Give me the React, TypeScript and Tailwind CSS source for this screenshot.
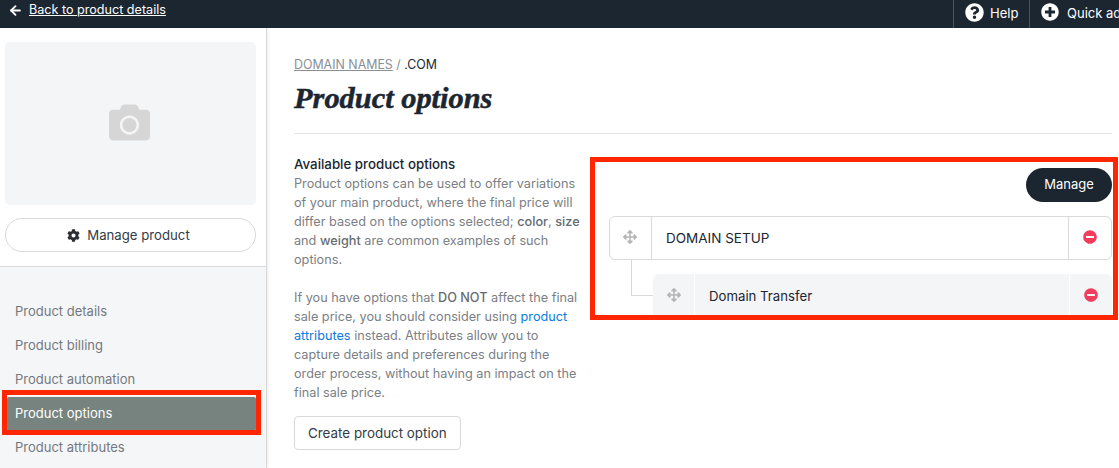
import { ArrowLeft } from 'lucide-react';
import { FaCamera, FaCog, FaMinusCircle, FaPlusCircle, FaQuestionCircle, FaArrowsAlt } from 'react-icons/fa';

const navItems = ['Product details', 'Product billing', 'Product automation', 'Product options', 'Product attributes'];

function OptionRow({ label, child }: { label: string; child?: boolean }) {
  return (
    <div
      className={
        child
          ? 'flex h-[44px] rounded-t-[6px] bg-[#f4f5f7]'
          : 'flex h-[44px] rounded-[6px] border border-[#d9d9d9] bg-white'
      }
    >
      <div
        className={
          child
            ? 'flex w-[42px] shrink-0 items-center justify-center border-r border-white pb-[2px] text-[#b5b5b5]'
            : 'flex w-[42px] shrink-0 items-center justify-center border-r border-[#d9d9d9] pr-[2px] pb-[3px] text-[#b5b5b5]'
        }
      >
        <FaArrowsAlt size={14} />
      </div>
      <div
        className={
          child
            ? 'flex flex-1 items-center pl-[14px] pt-[1px] text-[13.2px] text-[#1b2631]'
            : 'flex flex-1 items-center pl-[14px] text-[13.5px] text-[#1b2631]'
        }
      >
        {label}
      </div>
      <div
        className={
          child
            ? 'flex w-[43px] shrink-0 items-center justify-center border-l border-white pb-[2px] text-[#f23c5c]'
            : 'flex w-[43px] shrink-0 items-center justify-center border-l border-[#d9d9d9] pb-[3px] text-[#f23c5c]'
        }
      >
        <FaMinusCircle size={14} />
      </div>
    </div>
  );
}

export default function App() {
  return (
    <div className="relative flex h-[468px] w-[1119px] flex-col overflow-hidden bg-white font-['Inter',sans-serif]">
      <header className="flex h-[28px] shrink-0 items-start justify-between bg-[#1b2631] text-white">
        <div className="flex h-[20px] items-center gap-[6px] pl-[8px] text-[12.6px]">
          <ArrowLeft size={15} strokeWidth={3} />
          <a className="underline">Back to product details</a>
        </div>
        <div className="flex h-full w-[166px] shrink-0 text-[13px]">
          <div className="flex h-full w-[76px] shrink-0 items-center gap-[6px] border-l border-[#4a545e] pb-[4px] pl-[11px] leading-none">
            <FaQuestionCircle size={19} />
            <span className="pt-[3px]">Help</span>
          </div>
          <div className="flex h-full items-center gap-[8px] whitespace-nowrap border-l border-[#4a545e] pb-[4px] pl-[11px] leading-none">
            <FaPlusCircle size={18} />
            <span className="pt-[3px]">Quick add</span>
          </div>
        </div>
      </header>

      <div className="flex min-h-0 flex-1">
        <aside className="flex w-[267px] shrink-0 flex-col border-r border-[#d9d9d9] bg-white shadow-[1px_0_3px_rgba(0,0,0,0.08)]">
          <div className="border-b border-[#d9d9d9] px-[5px] pb-[14px] pt-[14px] pr-[10px]">
            <div className="flex h-[163px] items-center justify-center rounded-[5px] bg-[#f4f5f7] pb-[2px] pr-[2px] text-[#d6d6d6]">
              <FaCamera size={41} />
            </div>
            <button className="mt-[13px] flex h-[34px] w-full items-center justify-center gap-[7px] rounded-full border border-[#d9d9d9] pr-[4px] pt-[1px] text-[13.2px] text-[#333b44]">
              <FaCog size={13} className="text-[#2b2f33]" />
              Manage product
            </button>
          </div>
          <nav className="flex-1 bg-[#f5f6f8] pl-[7px] pr-[10px] pt-[28px]">
            {navItems.map((item) =>
              item === 'Product options' ? (
                <div key={item} className="flex h-[34px] items-center rounded-[2px] bg-[#77837f] pl-[8px] text-[13px] text-white">
                  {item}
                </div>
              ) : (
                <div key={item} className="flex h-[34px] items-center pl-[8px] text-[13px] text-[#74797e]">
                  {item}
                </div>
              ),
            )}
          </nav>
        </aside>

        <main className="min-w-0 flex-1 pl-[27px] pr-[7px] pt-[28px]">
          <div className="text-[12.4px] leading-[18px] text-[#8a8f94]">
            <span className="underline">DOMAIN NAMES</span> / <span className="text-[#1b2631]">.COM</span>
          </div>
          <h1 className="mt-[6px] font-['Liberation_Serif',serif] text-[30.4px] font-bold italic leading-[36px] text-[#1b2631] [-webkit-text-stroke:0.5px_#1b2631]">
            Product options
          </h1>
          <div className="mt-[17px] border-t border-[#e5e5e5]" />

          <div className="flex gap-[29px]">
            <div className="w-[286px] shrink-0 pt-[21px]">
              <h2 className="text-[13.3px] font-medium leading-[19px] text-[#1b2631]">Available product options</h2>
              <p className="text-[12.7px] leading-[19px] text-[#7b8085]">
                Product options can be used to offer variations of your main product, where the final price will differ
                based on the options selected; <span className="font-medium text-[#666b70]">color</span>,{' '}
                <span className="font-medium text-[#666b70]">size</span> and{' '}
                <span className="font-medium text-[#666b70]">weight</span> are common examples of such options.
              </p>
              <p className="mt-[19px] text-[12.7px] leading-[19px] text-[#7b8085]">
                If you have options that <span className="font-medium text-[#666b70]">DO NOT</span> affect the final sale
                price, you should consider using <a className="text-[#0a7be0]">product attributes</a> instead. Attributes
                allow you to capture details and preferences during the order process, without having an impact on the
                final sale price.
              </p>
              <button className="mt-[14px] h-[34px] rounded-[4px] border border-[#d9d9d9] px-[13px] text-[13.4px] text-[#333b44]">
                Create product option
              </button>
            </div>

            <div className="min-w-0 flex-1 pt-[34px]">
              <div className="flex justify-end">
                <button className="h-[34px] w-[86px] rounded-full bg-[#1b2631] text-[13px] text-white">Manage</button>
              </div>
              <div className="mt-[14px]">
                <OptionRow label="DOMAIN SETUP" />
                <div className="relative mt-[14px] pl-[44px]">
                  <div className="absolute bottom-[22px] left-[22px] top-[-14px] w-[22px] border-b border-l border-[#d9d9d9]" />
                  <OptionRow label="Domain Transfer" child />
                </div>
              </div>
            </div>
          </div>
        </main>
      </div>

      <div className="pointer-events-none absolute left-[2px] top-[390px] h-[45px] w-[259px] border-[5px] border-[#ff2600]" />
      <div className="pointer-events-none absolute left-[590px] top-[157px] h-[163px] w-[528px] border-[5px] border-[#ff2600]" />
    </div>
  );
}
